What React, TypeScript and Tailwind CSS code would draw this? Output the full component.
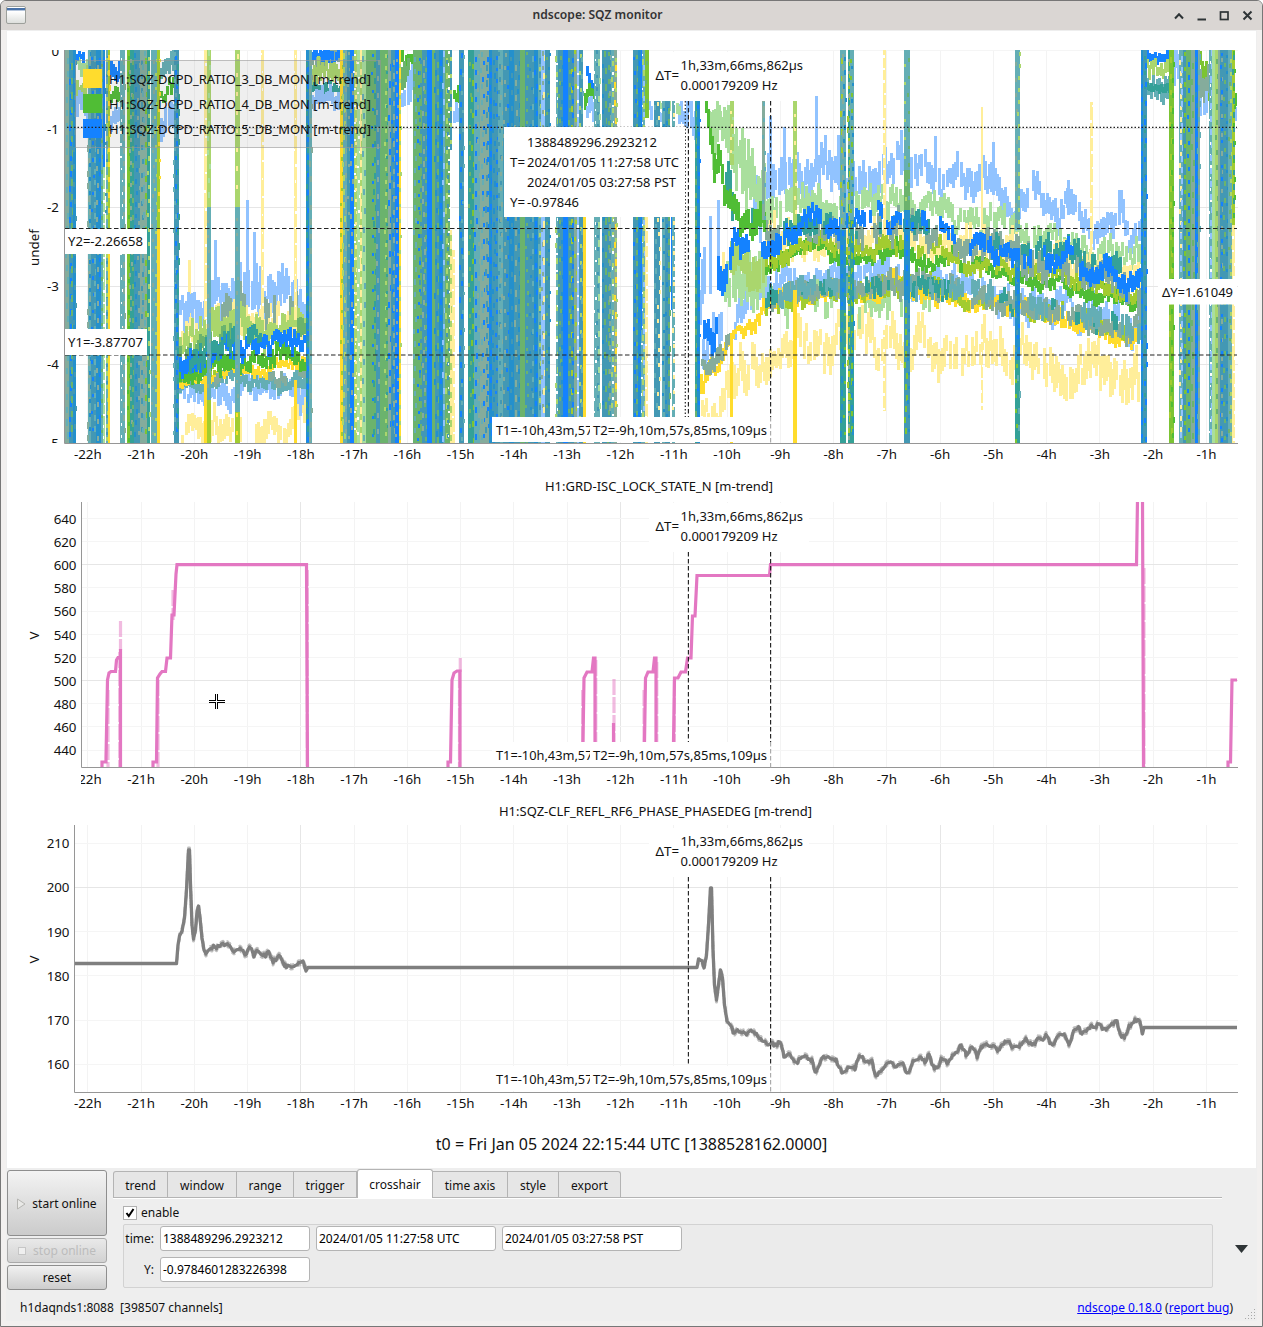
import type { ReactNode } from 'react'

const C = {
  blue: '#1482ff',
  yellow: '#ffdc2d',
  green: '#50bd35',
  lblue: '#91c3ff',
  lyellow: '#ffee9a',
  lgreen: '#a9df9d',
  teal: '#64aeb5',
  deep: '#34a198',
  steel: '#4398b4',
  azure: '#2490cc',
  sage: '#85ac9c',
  mid: '#6bb36d',
  lime: '#a2cc30',
  plime: '#aad66d',
  leaf: '#7cc433',
  white: '#ffffff',
}

type Color = keyof typeof C
type Layer = { fill: string; d: string }

// x0, x1, base colour, dash colours, y0, y1
type Band = [number, number, Color, Color[], number?, number?]

const TOP = 50
const BOTTOM = 443

const bands: Band[] = [
  [65, 69, 'sage', ['teal']],
  [69, 73, 'steel', ['blue', 'mid']],
  [73, 76, 'azure', ['steel']],
  [87.5, 91, 'teal', ['sage', 'azure']],
  [91, 96, 'steel', ['blue', 'teal']],
  [96, 101, 'azure', ['sage', 'blue']],
  [101, 103, 'teal', ['mid']],
  [103, 105, 'blue', ['azure'], 50, 167],
  [103, 105, 'lgreen', ['white'], 167, 443],
  [105.5, 108, 'teal', ['steel', 'plime']],
  [108, 110, 'lime', ['yellow'], 50, 228],
  [108, 110, 'yellow', ['yellow'], 228, 443],
  [120, 125, 'teal', ['white', 'sage']],
  [127, 129.5, 'leaf', ['green']],
  [129.5, 134, 'deep', ['sage', 'mid']],
  [134, 140, 'steel', ['azure', 'sage']],
  [140, 147, 'sage', ['steel', 'teal', 'leaf']],
  [147, 150, 'deep', ['plime']],
  [151, 157, 'teal', ['sage', 'plime']],
  [157, 160, 'lime', ['yellow'], 50, 228],
  [157, 160, 'yellow', ['yellow'], 228, 443],
  [173.5, 179, 'steel', ['teal', 'blue', 'deep']],
  [204, 207, 'lyellow', ['white'], 50, 320],
  [207, 211, 'plime', ['lgreen'], 50, 207],
  [207, 211, 'teal', ['sage'], 207, 400],
  [204, 207, 'yellow', ['yellow'], 378, 443],
  [207, 211, 'lime', ['lime'], 400, 443],
  [235, 239.5, 'plime', ['lyellow'], 50, 207],
  [235, 239.5, 'teal', ['sage'], 207, 412],
  [235, 239.5, 'lime', ['yellow'], 412, 443],
  [260.5, 264, 'lyellow', ['white'], 50, 320],
  [293.5, 297, 'lyellow', ['white'], 50, 320],
  [293.5, 297, 'yellow', ['yellow'], 380, 443],
  [306, 309, 'azure', ['deep', 'blue']],
  [309, 311.5, 'teal', ['sage']],
  [340, 342.5, 'yellow', ['lime']],
  [342.5, 347, 'teal', ['plime', 'sage']],
  [347, 350, 'steel', ['sage']],
  [350, 353.5, 'blue', ['sage']],
  [353.5, 357, 'plime', ['white', 'lyellow']],
  [357, 360, 'lgreen', ['white']],
  [360, 362, 'lyellow', ['plime']],
  [362, 366, 'lgreen', ['teal']],
  [366, 371, 'mid', ['mid']],
  [371, 376, 'mid', ['blue', 'deep']],
  [376, 380, 'steel', ['sage']],
  [380, 384, 'mid', ['mid']],
  [384, 388, 'mid', ['plime', 'deep']],
  [388, 391, 'sage', ['blue']],
  [391, 395, 'steel', ['blue', 'sage']],
  [395, 399, 'blue', ['sage']],
  [399, 401, 'yellow', ['plime']],
  [413, 417, 'mid', ['teal']],
  [417, 422, 'mid', ['blue', 'steel']],
  [422, 426.5, 'steel', ['sage', 'mid']],
  [426.5, 431.5, 'blue', ['blue']],
  [431.5, 434.5, 'mid', ['mid']],
  [434.5, 439, 'steel', ['azure', 'mid']],
  [439, 442.5, 'azure', ['blue']],
  [442.5, 445, 'teal', ['lblue']],
  [445, 450, 'mid', ['plime', 'steel', 'white']],
  [450, 452, 'lyellow', ['plime'], 230, 443],
  [450, 452, 'steel', ['plime'], 50, 150],
  [452, 455, 'lyellow', ['white'], 250, 443],
  [459, 464, 'steel', ['blue', 'teal']],
  [468, 474, 'deep', ['mid', 'leaf']],
  [474, 480, 'teal', ['blue', 'sage']],
  [480, 485, 'sage', ['teal', 'blue']],
  [485, 489, 'sage', ['steel', 'blue']],
  [489, 492, 'azure', ['blue']],
  [492, 498, 'steel', ['azure', 'blue']],
  [498, 503, 'teal', ['steel', 'sage']],
  [503, 509, 'steel', ['sage', 'blue']],
  [509, 514, 'azure', ['steel']],
  [514, 520, 'steel', ['sage', 'azure']],
  [520, 525, 'mid', ['mid']],
  [525, 529, 'steel', ['mid']],
  [529, 534, 'steel', ['azure', 'teal']],
  [534, 538, 'azure', ['blue']],
  [538, 541, 'teal', ['steel', 'plime']],
  [541, 545, 'lblue', ['sage', 'lyellow']],
  [545, 550, 'steel', ['mid', 'azure']],
  [555.5, 558, 'teal', ['plime', 'white']],
  [558, 563, 'steel', ['mid', 'azure']],
  [563, 568, 'blue', ['blue']],
  [568, 574, 'steel', ['mid', 'lime', 'blue']],
  [574, 577, 'sage', ['lime']],
  [577, 579, 'lblue', ['white']],
  [579, 583, 'steel', ['plime', 'teal']],
  [583, 586, 'yellow', ['yellow'], 217, 443],
  [594, 600, 'teal', ['white', 'steel', 'lgreen']],
  [601.5, 607, 'steel', ['azure', 'mid']],
  [607, 611, 'steel', ['mid', 'sage']],
  [611, 614, 'teal', ['plime', 'white']],
  [614, 617, 'sage', ['yellow', 'plime']],
  [633, 638, 'steel', ['blue', 'mid']],
  [638, 641, 'azure', ['blue']],
  [641, 645, 'teal', ['white', 'plime', 'lblue']],
  [641, 642, 'blue', ['blue'], 50, 330],
  [645, 649, 'leaf', ['mid'], 50, 118],
  [645, 648, 'lyellow', ['white'], 217, 443],
  [654, 660, 'steel', ['teal', 'lyellow'], 100, 443],
  [661.5, 665, 'teal', ['azure'], 100, 443],
  [665, 670, 'steel', ['azure', 'mid'], 100, 443],
  [670.5, 672, 'blue', ['blue'], 217, 310],
  [672, 675, 'teal', ['lyellow', 'white'], 100, 443],
  [695, 697, 'deep', ['mid'], 100, 443],
  [697, 700, 'azure', ['blue'], 100, 443],
]

// drawn on top of the traces
const frontBands: Band[] = [
  [729.5, 733.5, 'plime', ['lyellow', 'lgreen'], 100, 165],
  [729.5, 733, 'yellow', ['yellow'], 333, 443],
  [762, 765, 'sage', ['teal'], 100, 220],
  [792.5, 797, 'plime', ['lyellow'], 100, 225],
  [792.5, 797, 'yellow', ['yellow'], 290, 443],
  [840, 845.5, 'teal', ['lime', 'sage', 'azure'], 50, 230],
  [840, 845.5, 'azure', ['blue', 'deep'], 230, 310],
  [840, 845.5, 'deep', ['azure', 'leaf'], 310, 443],
  [847.5, 850, 'deep', ['lime', 'sage']],
  [850, 853.5, 'teal', ['leaf', 'azure'], 50, 220],
  [850, 853.5, 'deep', ['leaf', 'azure'], 220, 443],
  [882.5, 885.5, 'lyellow', ['white'], 50, 230],
  [882.5, 885.5, 'lyellow', ['white'], 330, 411],
  [904, 909.5, 'teal', ['plime', 'mid'], 50, 170],
  [904, 909.5, 'mid', ['plime', 'teal'], 170, 210],
  [904, 909.5, 'azure', ['blue'], 210, 300],
  [904, 909.5, 'steel', ['leaf', 'azure'], 300, 443],
  [980.5, 983, 'lyellow', ['lyellow'], 107, 230],
  [980.5, 983, 'lyellow', ['white'], 330, 410],
  [1014.5, 1019.5, 'teal', ['sage', 'plime'], 50, 230],
  [1014.5, 1019.5, 'azure', ['steel', 'blue'], 260, 360],
  [1014.5, 1019.5, 'deep', ['leaf', 'teal'], 360, 443],
  [1090, 1093, 'lyellow', ['white'], 102, 250],
  [1140.5, 1143, 'azure', ['blue']],
  [1143, 1146.5, 'steel', ['deep', 'blue']],
  [1169, 1173.5, 'leaf', ['lime', 'green']],
  [1179, 1182.5, 'teal', ['lyellow', 'lblue']],
  [1182.5, 1186, 'steel', ['leaf']],
  [1186, 1191, 'mid', ['blue']],
  [1191, 1195, 'sage', ['mid']],
  [1195, 1197.5, 'blue', ['azure']],
  [1197.5, 1199.5, 'sage', ['teal']],
  [1209, 1212, 'teal', ['white', 'lblue']],
  [1212, 1215, 'lgreen', ['lgreen']],
  [1215, 1218, 'plime', ['mid']],
  [1218, 1220, 'sage', ['sage']],
  [1220, 1223, 'steel', ['blue', 'sage']],
  [1223, 1228, 'steel', ['mid', 'azure']],
  [1228, 1232, 'teal', ['mid', 'plime']],
  [1232, 1235, 'lime', ['deep', 'green'], 50, 225],
  [1232, 1235, 'lyellow', ['white'], 225, 443],
]

// colour, amplitude of the jitter, control points [x, yTop, yBottom], share of columns drawn
type Ribbon = [Color, number, number[][], number?]

const ribbons: Ribbon[] = [
  // first lock
  ['lblue', 22, [[179, 300, 325], [195, 285, 315], [225, 282, 312], [250, 265, 305], [275, 285, 320], [289, 262, 290], [305, 290, 310]]],
  ['lyellow', 16, [[179, 330, 345], [200, 315, 340], [235, 310, 335], [262, 315, 330], [285, 305, 330], [305, 305, 330]]],
  ['sage', 14, [[185, 300, 318], [210, 290, 315], [250, 290, 318], [300, 292, 318]], 0.35],
  ['plime', 9, [[179, 336, 350], [210, 315, 345], [240, 305, 335], [268, 322, 345], [290, 310, 332], [305, 318, 335]]],
  ['mid', 8, [[179, 345, 362], [200, 335, 350], [240, 325, 345], [268, 335, 350], [290, 318, 338], [305, 325, 340]], 0.7],
  ['lyellow', 18, [[179, 425, 443], [200, 420, 440], [220, 410, 432], [250, 416, 440], [270, 412, 436], [305, 405, 432]], 0.85],
  ['lblue', 14, [[179, 390, 402], [215, 380, 398], [250, 382, 400], [270, 384, 402], [285, 378, 395], [305, 380, 400]]],
  ['teal', 8, [[179, 382, 395], [205, 375, 388], [235, 372, 384], [270, 378, 392], [305, 372, 384]]],
  ['yellow', 5, [[179, 380, 387], [200, 375, 382], [230, 366, 373], [250, 363, 374], [262, 368, 378], [278, 361, 371], [305, 356, 368]]],
  ['lime', 5, [[179, 368, 380], [200, 366, 376], [215, 368, 376]]],
  ['sage', 6, [[200, 372, 384], [240, 372, 380], [270, 374, 384], [305, 368, 376]], 0.4],
  ['green', 8, [[179, 370, 388], [200, 366, 382], [210, 350, 370], [240, 352, 368], [265, 360, 373], [275, 346, 362], [305, 350, 366]]],
  ['blue', 9, [[179, 356, 376], [205, 350, 368], [235, 340, 356], [250, 334, 352], [268, 346, 360], [275, 334, 348], [290, 330, 348], [305, 336, 348]]],
  ['deep', 9, [[179, 353, 370], [205, 346, 364], [230, 330, 345], [250, 328, 342], [268, 338, 352]], 0.65],

  // second lock, light envelopes
  ['lblue', 30, [[697, 290, 330], [705, 260, 330], [720, 210, 290], [735, 190, 240], [750, 180, 225], [770, 160, 205], [785, 150, 200]], 0.7],
  ['lblue', 26, [[700, 340, 380], [712, 330, 370], [730, 300, 325], [750, 285, 315], [770, 285, 305]], 0.8],
  ['lblue', 18, [[770, 162, 195], [800, 162, 190], [820, 148, 182], [840, 167, 195], [870, 160, 190], [895, 155, 180], [905, 142, 172], [925, 168, 190], [935, 152, 178], [945, 172, 195], [970, 172, 195], [993, 165, 195], [1005, 190, 212], [1030, 183, 205], [1050, 202, 222], [1068, 192, 215], [1085, 213, 232], [1110, 213, 235], [1122, 203, 225], [1128, 228, 245], [1143, 223, 255]]],
  ['lgreen', 8, [[708, 100, 125], [713, 100, 175], [719, 100, 118]]],
  ['lgreen', 10, [[719, 100, 128], [728, 105, 150], [736, 110, 185], [745, 150, 200], [765, 165, 215]]],
  ['lgreen', 14, [[735, 150, 180], [755, 170, 200], [770, 200, 225], [795, 195, 218], [815, 180, 210], [830, 205, 222], [850, 190, 215], [872, 198, 218], [905, 195, 215], [935, 192, 215], [955, 215, 232], [975, 210, 228], [1010, 215, 238], [1040, 220, 240], [1068, 230, 245], [1095, 245, 262], [1143, 245, 265]]],
  ['lyellow', 12, [[765, 225, 262], [800, 225, 245], [850, 228, 248], [900, 225, 248], [950, 235, 260], [1000, 240, 268], [1050, 245, 275], [1100, 262, 288], [1143, 275, 300]]],
  ['lgreen', 22, [[722, 260, 290], [745, 255, 300], [765, 260, 300]], 0.8],
  ['plime', 18, [[730, 250, 280], [750, 255, 290], [765, 262, 295]], 0.7],
  ['lyellow', 20, [[722, 260, 285], [740, 265, 300], [765, 265, 295]], 0.3],
  ['lblue', 16, [[765, 288, 305], [790, 268, 290], [820, 265, 285], [860, 271, 292], [880, 259, 285], [920, 275, 290], [960, 279, 300], [1000, 283, 305], [1055, 292, 315], [1105, 308, 330], [1143, 325, 345]], 0.9],
  ['lyellow', 20, [[701, 402, 424], [715, 393, 418], [730, 372, 405], [745, 350, 382], [770, 342, 367], [800, 331, 358], [840, 328, 358], [875, 320, 352], [900, 336, 362], [930, 328, 358], [960, 338, 366], [1000, 336, 364], [1045, 346, 376], [1075, 358, 388], [1110, 350, 382], [1140, 360, 392]]],
  ['lgreen', 12, [[770, 295, 315], [815, 290, 322], [840, 295, 315], [905, 290, 314], [960, 295, 312]], 0.4],

  // second lock, means
  ['yellow', 7, [[700, 375, 395], [704, 362, 378], [714, 360, 372], [722, 340, 352], [735, 330, 339], [750, 316, 329], [770, 297, 311], [800, 285, 299], [830, 285, 296], [860, 284, 297], [890, 279, 294], [925, 284, 299], [960, 294, 308], [1000, 300, 312], [1040, 308, 321], [1075, 316, 331], [1110, 324, 339], [1135, 328, 343]]],
  ['sage', 7, [[701, 358, 370], [714, 352, 368], [725, 335, 348], [735, 320, 330]], 0.6],
  ['lime', 8, [[765, 298, 312], [800, 284, 298], [830, 284, 296], [860, 285, 298], [888, 276, 292], [920, 280, 296], [945, 283, 298], [965, 292, 304], [1000, 298, 310], [1040, 305, 318], [1080, 312, 326], [1110, 320, 334], [1143, 326, 342]], 0.6],
  ['sage', 8, [[765, 294, 308], [800, 280, 296], [830, 282, 296], [860, 281, 297], [888, 272, 292], [920, 276, 296], [945, 279, 298], [965, 288, 304], [1000, 294, 310], [1040, 301, 318], [1080, 308, 326], [1110, 316, 334], [1143, 322, 342]], 0.85],
  ['deep', 9, [[765, 296, 310], [800, 282, 296], [888, 274, 290], [945, 282, 296], [1000, 296, 308], [1080, 310, 324], [1143, 324, 340]], 0.25],
  ['teal', 10, [[765, 288, 308], [800, 276, 292], [860, 278, 294], [945, 278, 294], [1000, 290, 306], [1080, 304, 322], [1143, 318, 338]], 0.45],
  ['green', 7, [[765, 262, 273], [780, 255, 269], [795, 242, 253], [815, 236, 248], [832, 252, 266], [860, 254, 266], [875, 242, 257], [905, 240, 255], [925, 256, 267], [950, 252, 265], [965, 266, 277], [990, 262, 273], [1010, 272, 283], [1050, 276, 288], [1080, 286, 298], [1110, 288, 302], [1143, 298, 312]]],
  ['lime', 7, [[765, 257, 273], [780, 256, 271], [795, 239, 251], [815, 233, 247], [832, 245, 255], [860, 248, 260], [880, 234, 248], [905, 237, 251], [925, 248, 260], [935, 239, 252], [950, 250, 262], [965, 258, 271], [990, 258, 269], [1010, 266, 277], [1050, 268, 280], [1080, 278, 290], [1110, 282, 294], [1143, 292, 304]], 0.85],
  ['sage', 10, [[765, 225, 245], [800, 220, 238], [850, 218, 240], [910, 215, 240], [960, 235, 254], [1015, 245, 268], [1070, 250, 280], [1100, 265, 285], [1143, 270, 300]], 0.65],
  ['deep', 9, [[725, 160, 200], [735, 190, 220], [762, 215, 235], [800, 215, 232], [860, 218, 230], [920, 215, 232], [1000, 234, 250], [1060, 242, 260], [1125, 255, 275], [1143, 270, 290]], 0.4],
  ['blue', 10, [[703, 322, 342], [710, 325, 350], [714, 332, 350], [717, 262, 300], [722, 275, 300], [733, 233, 254], [745, 234, 254], [762, 238, 256], [775, 226, 246], [790, 223, 240], [800, 216, 230], [815, 207, 222], [832, 223, 238], [845, 216, 232], [860, 218, 232], [877, 203, 218], [890, 218, 230], [905, 211, 226], [925, 224, 238], [937, 208, 222], [950, 230, 244], [970, 234, 248], [978, 224, 240], [1000, 236, 252], [1020, 248, 266], [1035, 246, 264], [1055, 254, 270], [1068, 244, 260], [1090, 266, 282], [1108, 262, 280], [1118, 278, 294], [1130, 280, 298], [1143, 270, 290]], 0.72],
  ['green', 6, [[705, 95, 112], [710, 125, 155], [714, 148, 175], [718, 140, 165], [723, 180, 200], [733, 195, 215], [738, 213, 234], [750, 218, 242], [760, 203, 230], [764, 215, 235]]],

  // dips at the top between the bands
  ['lgreen', 12, [[76, 50, 62], [87, 50, 70]]],
  ['blue', 8, [[76, 52, 60], [83, 50, 62]]],
  ['plime', 12, [[76, 72, 92], [87, 65, 90]]],
  ['lblue', 14, [[76, 95, 115], [87, 90, 115]]],
  ['blue', 10, [[110, 65, 80], [120, 60, 78]]],
  ['green', 8, [[110, 92, 106], [120, 85, 98]]],
  ['lblue', 14, [[110, 108, 125], [120, 105, 125]]],
  ['teal', 10, [[160, 68, 85], [173, 50, 72]]],
  ['green', 8, [[160, 92, 103], [173, 78, 90]]],
  ['lblue', 16, [[160, 108, 130], [173, 108, 132]]],
  ['sage', 8, [[311, 52, 68], [341, 50, 70]]],
  ['blue', 6, [[311, 50, 60], [330, 50, 64], [341, 50, 58]]],
  ['plime', 10, [[311, 66, 84], [341, 66, 85]]],
  ['deep', 5, [[311, 80, 92], [341, 84, 94]]],
  ['lblue', 9, [[311, 90, 105], [341, 92, 108]]],
  ['green', 8, [[401, 50, 65], [413, 50, 60]]],
  ['mid', 10, [[401, 65, 90], [413, 50, 68]]],
  ['lblue', 14, [[401, 100, 125], [407, 85, 115], [413, 75, 100]]],
  ['green', 8, [[453, 85, 100], [460, 78, 95]]],
  ['lblue', 12, [[453, 105, 125], [460, 100, 120]]],
  ['blue', 10, [[586, 60, 75], [594, 70, 90]]],
  ['green', 8, [[584, 90, 108], [594, 80, 95]]],
  ['lblue', 10, [[586, 108, 122], [594, 100, 120]]],
  ['lblue', 12, [[648, 105, 120], [660, 110, 125], [675, 100, 120], [690, 105, 130], [697, 100, 135]], 0.8],
  ['lgreen', 6, [[640, 102, 112], [690, 102, 112]], 0.3],
  ['blue', 5, [[1146, 50, 62], [1169, 50, 60]]],
  ['plime', 8, [[1146, 62, 76], [1169, 66, 78]]],
  ['teal', 8, [[1146, 78, 95], [1169, 80, 100]]],
  ['deep', 4, [[1146, 82, 92], [1169, 84, 92]]],
  ['lblue', 14, [[1173, 50, 85], [1180, 50, 90]]],
  ['leaf', 10, [[1199, 50, 75], [1209, 55, 100]]],
  ['sage', 14, [[1199, 60, 95], [1209, 60, 90]], 0.7],
  ['lblue', 14, [[1199, 102, 125], [1209, 98, 115]]],
  ['lblue', 8, [[1235, 110, 125], [1237, 112, 128]]],
  ['green', 5, [[1235, 95, 106], [1237, 95, 106]]],
]

function makeRandom(seed: number) {
  let s = seed
  return () => {
    s = (s * 1664525 + 1013904223) % 4294967296
    return s / 4294967296
  }
}

const bar = (x: number, y: number, w: number, h: number) =>
  `M${x.toFixed(1)} ${y.toFixed(1)}h${w.toFixed(1)}v${h.toFixed(1)}h${(-w).toFixed(1)}z`

function bandLayers(list: Band[], seed: number): Layer[] {
  const rnd = makeRandom(seed)
  return list.flatMap(([x0, x1, base, dashes, y0 = TOP, y1 = BOTTOM]) => {
    const layers: Layer[] = [{ fill: C[base], d: bar(x0, y0, x1 - x0, y1 - y0) }]
    dashes.forEach((color, i) => {
      if (color === base) return
      const x = Math.min(x1 - 1.6, x0 + ((i + 0.3) * (x1 - x0)) / dashes.length)
      const period = 11 + rnd() * 8
      const len = color === 'white' ? 2.5 : 3 + rnd() * 3.5
      const w = color === 'white' ? 1.6 : 2
      let d = ''
      for (let y = y0 + rnd() * period; y < y1 - len; y += period) {
        d += bar(x + (rnd() > 0.7 ? 0.8 : 0) - (rnd() > 0.7 ? 0.8 : 0), y, w, len)
      }
      layers.push({ fill: C[color], d })
    })
    return layers
  })
}

function ribbonLayers(list: Ribbon[], seed: number): Layer[] {
  const rnd = makeRandom(seed)
  return list.map(([color, amp, pts, share = 1]) => {
    let d = ''
    let i = 0
    let drift = 0
    let on = true
    const pale = color.startsWith('l') && color !== 'lime' && color !== 'leaf'
    const end = pts[pts.length - 1][0]
    for (let x = pts[0][0]; x < end; x += 2) {
      while (i < pts.length - 2 && x > pts[i + 1][0]) i++
      const [xa, ta, ba] = pts[i]
      const [xb, tb, bb] = pts[i + 1]
      const k = (x - xa) / (xb - xa)
      drift = drift * 0.72 + (rnd() - 0.5) * amp * 1.15
      if (share < 1 && rnd() < 0.4) on = rnd() < share
      const a = ta + (tb - ta) * k + drift
      const b = ba + (bb - ba) * k + drift
      const half = ((b - a) / 2) * (0.55 + rnd() * 0.6)
      const mid = (a + b) / 2 + (rnd() - 0.5) * (b - a) * 0.5
      const top = Math.max(TOP, mid - half)
      const bot = Math.min(BOTTOM, mid + half)
      const skip = pale && rnd() < 0.08
      if (on && !skip && bot > top) d += bar(x, top, 2.6, bot - top)
    }
    return { fill: C[color], d }
  })
}

const traceLayers = [...ribbonLayers(ribbons, 42), ...bandLayers(bands, 7), ...bandLayers(frontBands, 19)]

// single narrow excursions above the envelopes
const spikes: [Color, number, number, number][] = [
  ['lblue', 245.5, 200, 300],
  ['lblue', 214, 240, 300],
  ['lblue', 252.5, 232, 290],
  ['lblue', 815, 96, 175],
  ['lblue', 783, 127, 190],
  ['lblue', 769, 116, 190],
  ['lblue', 837, 135, 185],
  ['lblue', 900, 130, 175],
  ['lblue', 933.5, 136, 175],
  ['lblue', 992, 142, 195],
  ['lblue', 1067, 180, 215],
  ['lblue', 1118, 190, 225],
  ['lyellow', 188, 260, 330],
]

const hourX = (h: number) => 87.8 + (22 - h) * 53.27
const hours = Array.from({ length: 22 }, (_, i) => 22 - i)

function T({ x, y, children, anchor, w }: { x: number; y: number; children: ReactNode; anchor?: 'middle' | 'end'; w?: number }) {
  return (
    <text
      x={x}
      y={y}
      textAnchor={anchor}
      textLength={w}
      lengthAdjust="spacingAndGlyphs"
      fill="#111"
      className="text-[13.33px] whitespace-pre"
    >
      {children}
    </text>
  )
}

type Tick = [number, string]

function Frame({ left, top, bottom, ticks, label, major, children }: {
  left: number
  top: number
  bottom: number
  ticks: Tick[]
  label: string
  major: number[]
  children: ReactNode
}) {
  const mid = (top + bottom) / 2
  return (
    <>
      <g shapeRendering="crispEdges">
        {hours.map((h) => (
          <rect key={h} x={Math.round(hourX(h) - 0.5)} y={top} width="1" height={bottom - top} fill={major.includes(h) ? '#e6e6e6' : '#f3f3f3'} />
        ))}
        {ticks.map(([y, text]) => (
          <rect key={text} x={left} y={Math.round(y - 0.5)} width={1238 - left} height="1" fill={text.endsWith('00') || text.startsWith('-') ? '#e6e6e6' : '#f5f5f5'} />
        ))}
      </g>
      {children}
      <path d={`M${left - 0.5} ${top}V${bottom + 0.5}H1238`} fill="none" stroke="#969696" />
      <text x="0" y="0" textAnchor="middle" fill="#111" className="text-[13.33px]" transform={`translate(39 ${mid + 1}) rotate(-90)`}>
        {label}
      </text>
    </>
  )
}

function HourLabels({ y, clipLeft }: { y: number; clipLeft?: number }) {
  const id = `hours-${y}`
  return (
    <>
      <clipPath id={id}>
        <rect x={clipLeft ?? 60} y={y - 16} width="1200" height="24" />
      </clipPath>
      <g clipPath={`url(#${id})`}>
        {hours.map((h) => (
          <T key={h} x={hourX(h)} y={y} anchor="middle">{`-${h}h`}</T>
        ))}
      </g>
    </>
  )
}

function Cursors({ top, bottom }: { top: number; bottom: number }) {
  return (
    <>
      <rect x="649" y={top + 2} width="160" height="49" fill="#fff" />
      <rect x="492" y={bottom - 26} width="278" height="25" fill="#fff" />
      <g stroke="#222" strokeWidth="1.15" strokeDasharray="4.5 2.5">
        <path d={`M688.4 ${top + 51}V${bottom - 26}`} />
        <path d={`M770.6 ${top + 51}V${bottom - 26}`} />
        <path d={`M770.6 ${bottom - 26}V${bottom}`} stroke="#aaa" />
      </g>
      <T x={655.5} y={top + 30}>ΔT=</T>
      <T x={680.5} y={top + 20} w={122.5}>1h,33m,66ms,862µs</T>
      <T x={680.5} y={top + 40} w={97}>0.000179209 Hz</T>
      <clipPath id={`t1-${top}`}>
        <rect x="490" y={bottom - 30} width="100" height="28" />
      </clipPath>
      <g clipPath={`url(#t1-${top})`}>
        <T x={496} y={bottom - 8} w={96.5}>T1=-10h,43m,57</T>
      </g>
      <T x={593} y={bottom - 8} w={174}>T2=-9h,10m,57s,85ms,109µs</T>
    </>
  )
}

const legend = [
  { n: 3, y: 79, fill: C.yellow },
  { n: 4, y: 104, fill: C.green },
  { n: 5, y: 129, fill: C.blue },
]

function RatioPlot() {
  const ticks: Tick[] = [[50.5, '0'], [128.6, '-1'], [207.3, '-2'], [286.2, '-3'], [364.4, '-4'], [443, '-5']]
  return (
    <svg className="block shrink-0" width="1249" height="439" viewBox="7 31 1249 439">
      <Frame left={65} top={50} bottom={443} ticks={ticks} label="undef" major={[18]}>
        <clipPath id="ratio">
          <rect x="65" y="50" width="1172" height="393" />
        </clipPath>
        <g clipPath="url(#ratio)" shapeRendering="crispEdges">
          {spikes.map(([c, x, y0, y1]) => (
            <path key={x} d={bar(x, y0, 3, y1 - y0)} fill={C[c]} />
          ))}
          {traceLayers.map((l, i) => (
            <path key={i} d={l.d} fill={l.fill} />
          ))}
        </g>
      </Frame>
      <clipPath id="ratio-ticks">
        <rect x="40" y="50" width="25" height="393" />
      </clipPath>
      <g clipPath="url(#ratio-ticks)">
        {ticks.map(([y, text]) => (
          <T key={text} x={59} y={y + 5} anchor="end">{text}</T>
        ))}
      </g>
      <HourLabels y={459} />

      <rect x="75.5" y="60.5" width="305" height="87" fill="#646464" fillOpacity="0.1" stroke="#969696" strokeOpacity="0.6" />
      {legend.map((l) => (
        <g key={l.n}>
          <rect x="83" y={l.y - 10} width="19" height="19" fill={l.fill} />
          <T x={109} y={l.y + 5} w={262}>{`H1:SQZ-DCPD_RATIO_${l.n}_DB_MON [m-trend]`}</T>
        </g>
      ))}

      <g stroke="#222" strokeWidth="1.2">
        <path d="M67 127.3H1237M685.3 101V417" strokeDasharray="1.5 2" />
        <path d="M65 228.5H1237M65 355H1237" strokeDasharray="4.5 2.5" />
      </g>
      <Cursors top={50} bottom={443} />
      <g fill="#fff">
        <rect x="65" y="229" width="82" height="25" />
        <rect x="65" y="329" width="82" height="26" />
        <rect x="1158" y="279" width="79" height="25.5" />
        <rect x="504" y="127" width="181" height="90" />
      </g>
      <T x={68} y={246} w={75}>Y2=-2.26658</T>
      <T x={68} y={347} w={75}>Y1=-3.87707</T>
      <T x={1162} y={297} w={71}>ΔY=1.61049</T>
      <T x={527} y={147} w={130}>1388489296.2923212</T>
      <T x={510} y={167}>T=</T>
      <T x={527} y={167} w={152}>2024/01/05 11:27:58 UTC</T>
      <T x={527} y={187} w={149}>2024/01/05 03:27:58 PST</T>
      <T x={510} y={207}>Y=</T>
      <T x={527} y={207} w={52}>-0.97846</T>
    </svg>
  )
}

const lockPaths = [
  'M102 768V762H106V758L107.5 680L109 673L111 671.5H115.5L116.5 660L118 657.5H120.5V649V768',
  'M153 768V762H156.5L157.5 678L160 674L162 671.5H165.5L167 658H170.5L172 615H174L176 574L177 564.7H306.5L307.5 768',
  'M448 768V762H450.5L452 680L454 673L457 671H460V768',
  'M583 742L584 678L587 672H592L593.5 658H595V742',
  'M613.5 723V742',
  'M644.5 742L645.5 678L648 672H653L654.5 658H656V742',
  'M673.5 742L674.5 678H678L681 672H685.5L687.5 658H691L692.5 616H695L697 575.5H769.5L770.5 564.7H1136.5L1137.5 500M1142.5 500L1143.5 768',
  'M1228 768V762H1230.5L1232 680H1237',
]

const lockGhosts = 'M120.5 621V650M460.3 658V672M614 679V742M307.3 570V768M108 690V768M158 680V768M595.8 660V742M582.6 690V742M656.8 662V742M644 690V742M674.4 680V742M119.8 652V768M173 590V620M1144 568V768M459.5 672V768'

function LockPlot() {
  const ticks: Tick[] = Array.from({ length: 11 }, (_, i) => [518.4 + i * 23.17, String(640 - i * 20)])
  return (
    <svg className="block shrink-0" width="1249" height="325" viewBox="7 470 1249 325">
      <T x={545} y={491} w={228}>H1:GRD-ISC_LOCK_STATE_N [m-trend]</T>
      <Frame left={82} top={502} bottom={767} ticks={ticks} label="V" major={[18, 12]}>
        <clipPath id="lock">
          <rect x="82" y="502" width="1156" height="265" />
        </clipPath>
        <g clipPath="url(#lock)" fill="none" strokeWidth="3.2" stroke="#e377c2">
          <path d={lockGhosts} strokeOpacity="0.5" strokeDasharray="16 2" />
          {lockPaths.map((d) => (
            <path key={d} d={d} />
          ))}
        </g>
      </Frame>
      {ticks.map(([y, text]) => (
        <T key={text} x={76.5} y={y + 5.3} anchor="end">{text}</T>
      ))}
      <HourLabels y={784} clipLeft={81} />
      <Cursors top={501} bottom={768} />
      <g fill="none" shapeRendering="crispEdges">
        <path d="M209 701.5H225M216.5 694V709" stroke="#fff" strokeWidth="3" />
        <path d="M209 700.5H215.5V694M217.5 694V700.5H225M209 702.5H215.5V709M217.5 709V702.5H225" stroke="#000" />
      </g>
    </svg>
  )
}

function noisyPath(pts: number[][], amp: number, seed: number) {
  const rnd = makeRandom(seed)
  let d = `M${pts[0][0]} ${pts[0][1]}`
  let drift = 0
  for (let i = 1; i < pts.length; i++) {
    const [xa, ya] = pts[i - 1]
    const [xb, yb, still] = pts[i]
    if (!still) {
      for (let x = xa + 1.5; x < xb; x += 1.5) {
        drift = drift * 0.55 + (rnd() - 0.5) * amp
        d += `L${x.toFixed(1)} ${(ya + ((yb - ya) * (x - xa)) / (xb - xa) + drift).toFixed(1)}`
      }
    }
    d += `L${xb} ${yb}`
  }
  return d
}

// third value marks a straight, noise-free segment
const phasePoints = [
  [74, 963.5], [176.5, 963.5, 1], [178, 945, 1], [179.5, 936, 1], [182, 931, 1], [184.5, 918, 1], [186.5, 890, 1], [188.5, 850, 1],
  [189.5, 850, 1], [190.5, 885, 1], [192, 925, 1], [193.5, 939, 1], [195.5, 930, 1], [197, 912, 1], [198.5, 906, 1], [200, 918, 1],
  [202, 938, 1], [204, 950, 1], [206, 954, 1], [212, 949], [220, 946], [228, 945], [234, 952], [240, 948], [245, 955], [250, 948],
  [254, 957], [258, 951], [264, 954], [269, 952], [273, 963], [280, 956], [285, 964], [291, 967], [297, 965], [303, 961], [306, 971, 1],
  [308, 967.5, 1], [697, 967.5, 1], [698.5, 959, 1], [702, 961, 1], [704, 968, 1], [706.5, 955, 1], [708.5, 925, 1], [710.5, 888, 1],
  [711.5, 888, 1], [713, 950, 1], [714.5, 985, 1], [716.5, 1000, 1], [718.5, 985, 1], [720.5, 970, 1], [722.5, 978, 1], [724.5, 1005, 1],
  [727, 1021, 1], [731, 1026, 1], [733, 1033], [745, 1033], [755, 1034], [762, 1041], [768, 1045], [774, 1046], [780, 1042],
  [784, 1057], [790, 1054], [796, 1062], [802, 1057], [812, 1059], [816, 1072], [822, 1058], [836, 1059], [842, 1073], [848, 1067],
  [855, 1070], [861, 1057], [866, 1062], [872, 1060], [876, 1076], [883, 1069], [891, 1062], [895, 1067], [903, 1063], [907, 1073],
  [914, 1061], [921, 1057], [925, 1063], [929, 1054], [933, 1065], [937, 1068], [941, 1058], [948, 1063], [954, 1055], [961, 1045],
  [966, 1056], [972, 1047], [977, 1058], [982, 1048], [990, 1046], [998, 1049], [1005, 1041], [1012, 1048], [1020, 1044], [1026, 1038],
  [1032, 1045], [1040, 1038], [1047, 1036], [1051, 1043], [1058, 1036], [1064, 1034], [1069, 1045], [1074, 1030], [1079, 1027],
  [1082, 1034], [1090, 1027], [1098, 1024], [1106, 1030], [1112, 1023], [1117, 1021], [1120, 1033], [1125, 1036], [1129, 1025],
  [1135, 1019], [1140, 1022], [1142.5, 1034, 1], [1144, 1027.5, 1], [1237, 1027.5, 1],
]

const phaseMean = noisyPath(phasePoints, 5, 11)

function PhasePlot() {
  const ticks: Tick[] = Array.from({ length: 6 }, (_, i) => [843 + i * 44.28, String(210 - i * 10)])
  return (
    <svg className="block shrink-0" width="1249" height="325" viewBox="7 795 1249 325">
      <T x={499} y={816} w={313}>H1:SQZ-CLF_REFL_RF6_PHASE_PHASEDEG [m-trend]</T>
      <Frame left={75} top={825} bottom={1092} ticks={ticks} label="V" major={[18, 6]}>
        <clipPath id="unlocked">
          <path d="M178 825H307V1092H178zM699 825H1143V1092H699z" />
        </clipPath>
        <g fill="none" strokeLinejoin="round" stroke="#7f7f7f">
          <g clipPath="url(#unlocked)" strokeOpacity="0.5" strokeWidth="3">
            <path d={phaseMean} transform="translate(0 -2)" strokeDasharray="5 4" />
            <path d={phaseMean} transform="translate(0 2)" strokeDasharray="4 5" />
          </g>
          <path d={phaseMean} strokeWidth="3.3" />
        </g>
      </Frame>
      {ticks.map(([y, text]) => (
        <T key={text} x={69.5} y={y + 5} anchor="end">{text}</T>
      ))}
      <HourLabels y={1108} />
      <Cursors top={826} bottom={1092} />
    </svg>
  )
}

function TitleBar() {
  return (
    <header className="relative flex h-[29px] shrink-0 items-center justify-center bg-[#dad6d3]">
      <svg className="absolute left-[5px] top-[4px]" width="22" height="20" viewBox="0 0 22 20">
        <defs>
          <linearGradient id="app" x2="0" y2="1">
            <stop offset="0.3" stopColor="#fff" />
            <stop offset="1" stopColor="#dcdedb" />
          </linearGradient>
        </defs>
        <rect x="0.5" y="1.5" width="19" height="17" rx="1.5" fill="url(#app)" stroke="#9da09b" />
        <rect x="1" y="3" width="18" height="2.4" fill="#4a72a8" />
      </svg>
      <h1 className="mr-[68px] text-[12.1px] font-semibold text-[#333]">ndscope: SQZ monitor</h1>
      <svg className="absolute right-[7px] top-[5px]" width="84" height="20" viewBox="1171 6 84 20" fill="none" stroke="#2e3436" strokeWidth="2">
        <path d="M1175 18.5L1179 14.2L1183 18.5" />
        <path d="M1197.500 19.500H1206" />
        <rect x="1220.500" y="12" width="7.500" height="7.500" strokeWidth="1.7" />
        <path d="M1243.500 11.500L1251.500 19.500M1251.500 11.500L1243.500 19.500" />
      </svg>
    </header>
  )
}

const tabs = [
  { name: 'trend', cls: 'w-[55px]' },
  { name: 'window', cls: 'w-[69px]' },
  { name: 'range', cls: 'w-[57px]' },
  { name: 'trigger', cls: 'w-[63px]' },
  { name: 'crosshair', cls: 'w-[76px]' },
  { name: 'time axis', cls: 'w-[75px]' },
  { name: 'style', cls: 'w-[51px]' },
  { name: 'export', cls: 'w-[62px]' },
]

const buttonCls = 'flex w-[100px] items-center justify-center rounded-[3px] border bg-linear-to-b'
const fieldCls = 'h-[25px] rounded-[3px] border border-[#b4b4b4] bg-white px-[2px] text-black outline-none'

function ControlPanel() {
  return (
    <section className="flex h-[122px] shrink-0 pt-[2px]">
      <div className="flex flex-col gap-[2px]">
        <button type="button" className={`${buttonCls} h-[66px] gap-[6px] border-[#8e8e8e] from-[#f3f3f3] to-[#cbcbcb] pt-px`}>
          <svg width="9" height="12" viewBox="0 0 9 12">
            <path d="M0.500 1L8 6L0.500 11z" fill="#e9e9e7" stroke="#b5b5b2" />
          </svg>
          start online
        </button>
        <button type="button" disabled className={`${buttonCls} h-[25px] gap-[7px] border-[#a9a9a9] from-[#e9e9e9] to-[#d2d2d2] pt-px text-[#bcbcbc]`}>
          <span className="h-[8px] w-[8px] border border-[#c6c6c6] bg-[#efefef]" />
          stop online
        </button>
        <button type="button" className={`${buttonCls} h-[25px] border-[#8e8e8e] from-[#f1f1f1] to-[#cdcdcd] pt-px`}>
          reset
        </button>
      </div>

      <div className="ml-[6px] w-[1109px]">
        <nav className="flex h-[28px] items-end border-b border-[#b4b4b4] shadow-[0_1px_0_#fff]">
          {tabs.map((t) => (
            <button
              key={t.name}
              type="button"
              className={[
                'flex items-center justify-center border-[#b4b4b4]',
                t.cls,
                t.name === 'crosshair'
                  ? '-mb-px h-[29px] rounded-t-[3px] border border-b-0 bg-white pt-px'
                  : 'h-[26px] border-r border-t bg-[#e6e6e6] pt-[3px] first:rounded-tl-[3px] first:border-l last:rounded-tr-[3px]',
              ].join(' ')}
            >
              {t.name}
            </button>
          ))}
        </nav>
        <label className="ml-[10px] mt-[6px] flex h-[17px] items-center gap-[4px]">
          <span className="flex h-[14px] w-[14px] items-center justify-center border border-[#b0b0b0] bg-white">
            <svg width="10" height="10" viewBox="0 0 10 10">
              <path d="M1.500 5L3.800 8L8.500 1" fill="none" stroke="#000" strokeWidth="2" />
            </svg>
          </span>
          enable
        </label>
        <div className="ml-[10px] mt-[3px] flex h-[64px] w-[1090px] flex-col gap-[6px] rounded-[2px] border border-[#d2d2d2] bg-[#ebebeb] pt-px">
          <div className="flex items-center gap-[6px]">
            <span className="w-[30px] text-right">time:</span>
            <input className={`${fieldCls} w-[150px]`} defaultValue="1388489296.2923212" />
            <input className={`${fieldCls} w-[180px]`} defaultValue="2024/01/05 11:27:58 UTC" />
            <input className={`${fieldCls} w-[180px]`} defaultValue="2024/01/05 03:27:58 PST" />
          </div>
          <div className="flex items-center gap-[6px]">
            <span className="w-[30px] text-right">Y:</span>
            <input className={`${fieldCls} w-[150px]`} defaultValue="-0.9784601283226398" />
          </div>
        </div>
      </div>

      <button type="button" className="flex flex-1 items-center justify-center pl-[5px] pt-[38px]" aria-label="collapse">
        <svg width="13" height="8" viewBox="0 0 13 8">
          <path d="M0 0H13L6.500 8z" fill="#2e3436" />
        </svg>
      </button>
    </section>
  )
}

function Grip() {
  const dots = [[9, 0], [6, 3], [9, 3], [3, 6], [6, 6], [9, 6], [0, 9], [3, 9], [6, 9], [9, 9]]
  return (
    <svg className="absolute bottom-[6px] right-[6px]" width="11" height="11" viewBox="0 0 11 11">
      {dots.map(([x, y]) => (
        <rect key={`${x}-${y}`} x={x} y={y} width="1" height="1" fill="#a8a8a8" />
      ))}
    </svg>
  )
}

export default function App() {
  return (
    <div className="relative flex h-[1327px] w-[1263px] flex-col overflow-hidden rounded-t-[6px] border border-[#777] bg-[#f2f0ef] font-['Noto_Sans',sans-serif] text-[12px] text-[#111]">
      <TitleBar />
      <div className="mx-[5px] mb-[5px] flex flex-1 flex-col bg-[#eee] px-px pt-px">
        <main className="flex h-[1137px] shrink-0 flex-col bg-white">
          <RatioPlot />
          <LockPlot />
          <PhasePlot />
          <p className="mt-[12px] text-center text-[16px] leading-[24px]">t0 = Fri Jan 05 2024 22:15:44 UTC [1388528162.0000]</p>
        </main>
        <ControlPanel />
        <footer className="flex items-center justify-between pl-[13px] pr-[23px] pt-[9px]">
          <span className="whitespace-pre">h1daqnds1:8088  [398507 channels]</span>
          <span>
            <a className="text-[#0000ff] underline">ndscope 0.18.0</a> (<a className="text-[#0000ff] underline">report bug</a>)
          </span>
        </footer>
      </div>
      <Grip />
    </div>
  )
}
